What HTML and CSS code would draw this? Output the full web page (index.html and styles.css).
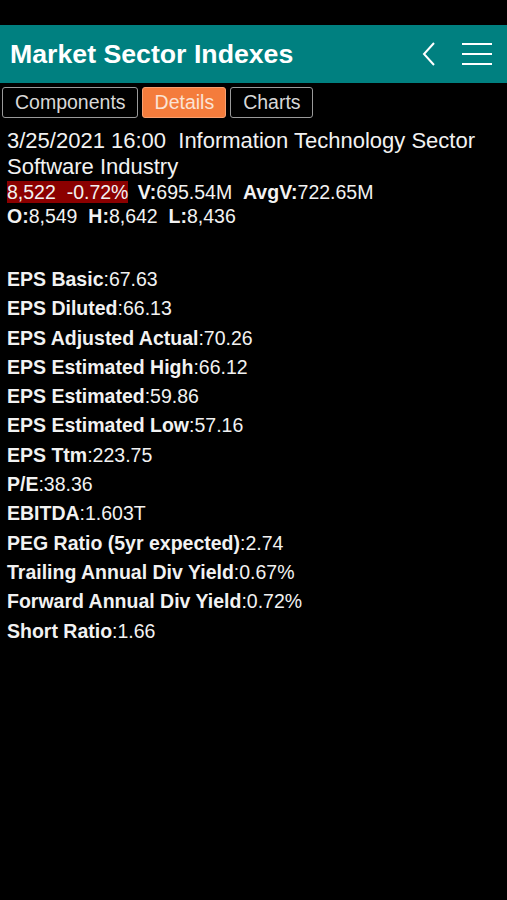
FILE: index.html
```html
<html>

<head>
    <link rel="stylesheet" href="styles.css">
</head>

<body>

    <div class="statusbar"></div>

    <header class="topbar">
        <div class="title">Market Sector Indexes</div>
        <div class="actions">
            <svg class="back" width="14" height="24" viewBox="0 0 14 24">
                <polyline points="12,1 2,12 12,23" fill="none" stroke="#fff" stroke-width="2" />
            </svg>
            <svg class="menu" width="30" height="24" viewBox="0 0 30 24">
                <line x1="0" y1="2" x2="30" y2="2" stroke="#fff" stroke-width="2" />
                <line x1="0" y1="12" x2="30" y2="12" stroke="#fff" stroke-width="2" />
                <line x1="0" y1="22" x2="30" y2="22" stroke="#fff" stroke-width="2" />
            </svg>
        </div>
    </header>

    <nav class="tabs">
        <div class="tab">Components</div>
        <div class="tab active">Details</div>
        <div class="tab">Charts</div>
    </nav>

    <div class="quote">
        <div class="big">3/25/2021 16:00&nbsp; Information Technology Sector</div>
        <div class="big">Software Industry</div>
        <div class="line">
            <span class="change">8,522&nbsp; -0.72%</span>
            <b>V:</b>695.54M&nbsp; <b>AvgV:</b>722.65M
        </div>
        <div class="line"><b>O:</b>8,549&nbsp; <b>H:</b>8,642&nbsp; <b>L:</b>8,436</div>
    </div>

    <div id="details">
        <div class="row"><b>EPS Basic</b>:67.63</div>
        <div class="row"><b>EPS Diluted</b>:66.13</div>
        <div class="row"><b>EPS Adjusted Actual</b>:70.26</div>
        <div class="row"><b>EPS Estimated High</b>:66.12</div>
        <div class="row"><b>EPS Estimated</b>:59.86</div>
        <div class="row"><b>EPS Estimated Low</b>:57.16</div>
        <div class="row"><b>EPS Ttm</b>:223.75</div>
        <div class="row"><b>P/E</b>:38.36</div>
        <div class="row"><b>EBITDA</b>:1.603T</div>
        <div class="row"><b>PEG Ratio (5yr expected)</b>:2.74</div>
        <div class="row"><b>Trailing Annual Div Yield</b>:0.67%</div>
        <div class="row"><b>Forward Annual Div Yield</b>:0.72%</div>
        <div class="row"><b>Short Ratio</b>:1.66</div>
    </div>

</body>

</html>
```

FILE: styles.css
```css
body {
    font-family: "Liberation Sans", Arial, sans-serif;
    margin: 0;
    background-color: #000;
    color: #f2f2f2;
}

.statusbar {
    height: 25px;
}

.topbar {
    background-color: #008080;
    height: 58px;
    display: flex;
    align-items: center;
    justify-content: space-between;
    padding: 0 15px 0 10px;
}

.title {
    color: white;
    font-weight: bold;
    font-size: 26.7px;
}

.actions {
    display: flex;
    align-items: center;
    gap: 26px;
}

.tabs {
    display: flex;
    gap: 4px;
    padding: 4px 2px 0 2px;
}

.tab {
    height: 29px;
    line-height: 29px;
    border: 1px solid #9a9a9a;
    border-radius: 3px;
    padding: 0 11px 0 12px;
    font-size: 19.5px;
    color: #d8d8d8;
}

.tab.active {
    background-color: #f47c3c;
    color: #fbe3d5;
    border-color: #f9a070;
}

.quote {
    padding: 10px 7px 0 7px;
}

.big {
    font-size: 22px;
    line-height: 26px;
}

.line {
    font-size: 19.5px;
    line-height: 24px;
}

.change {
    background-color: #8b0000;
    margin-right: 4px;
}

#details {
    padding: 37px 7px 0 7px;
}

.row {
    font-size: 19.5px;
    line-height: 29.3px;
}
```
